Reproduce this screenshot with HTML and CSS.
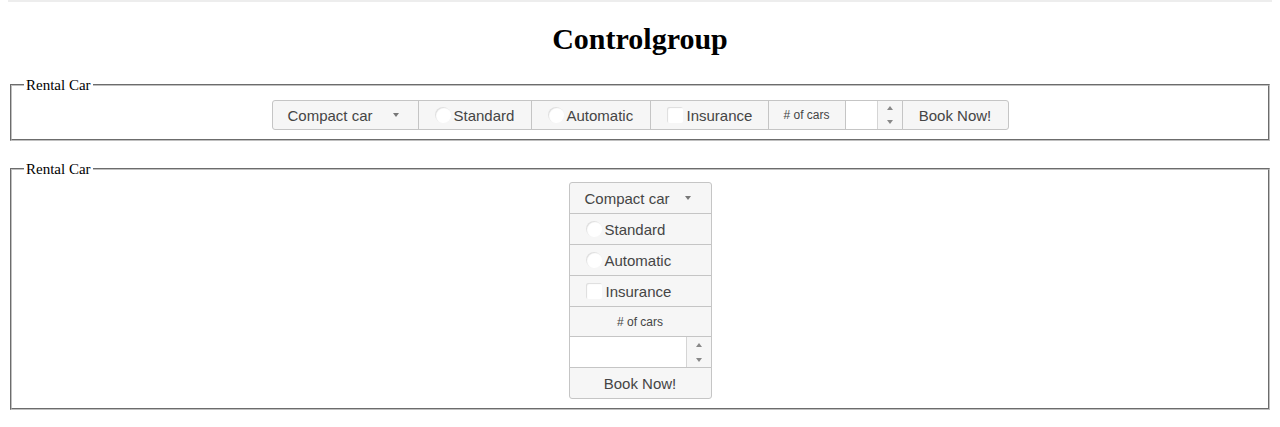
FILE: index.html
```html
<!DOCTYPE html>
<html>
<head>
<meta charset="utf-8">
<title>Controlgroup</title>
<link rel="stylesheet" href="styles.css">
</head>
<body>
<div class="topline"></div>
<h1 class="title">Controlgroup</h1>

<fieldset class="box box-h">
  <legend class="box-legend">Rental Car</legend>
  <div class="group group-h">
    <span class="item select w-select"><span>Compact car</span><span class="caret"></span></span>
    <span class="item check w-std"><span class="radio"></span>Standard</span>
    <span class="item check w-auto"><span class="radio"></span>Automatic</span>
    <span class="item check w-ins"><span class="checkbox"></span>Insurance</span>
    <span class="item label w-label"><span class="label-text"># of cars</span></span>
    <span class="item spinner w-spin"><span class="spin-input"></span><span class="spin-btns"><span class="spin-btn"><span class="arrow-up"></span></span><span class="spin-btn"><span class="arrow-down"></span></span></span></span>
    <span class="item button w-book">Book Now!</span>
  </div>
</fieldset>

<fieldset class="box box-v">
  <legend class="box-legend">Rental Car</legend>
  <div class="group group-v">
    <span class="item select"><span>Compact car</span><span class="caret"></span></span>
    <span class="item check"><span class="radio"></span>Standard</span>
    <span class="item check"><span class="radio"></span>Automatic</span>
    <span class="item check"><span class="checkbox"></span>Insurance</span>
    <span class="item label row-label"><span class="label-text"># of cars</span></span>
    <span class="item spinner"><span class="spin-input"></span><span class="spin-btns"><span class="spin-btn"><span class="arrow-up"></span></span><span class="spin-btn"><span class="arrow-down"></span></span></span></span>
    <span class="item button">Book Now!</span>
  </div>
</fieldset>
</body>
</html>
```

FILE: styles.css
```css
html, body {
  background: #ffffff;
}

body {
  margin: 0 8px 8px 8px;
  font-family: "Liberation Serif", "Times New Roman", serif;
  color: #000;
}

.topline {
  height: 2px;
  background: #ededed;
}

.title {
  margin: 19px 0 20px;
  text-align: center;
  font-family: "Liberation Serif", "Times New Roman", serif;
  font-size: 30px;
  font-weight: bold;
  line-height: 35px;
}

.box {
  margin: 0 2px;
  padding: 6px 12px 9px;
  border: 2px groove rgb(192, 192, 192);
  text-align: center;
}

.box-v {
  margin-top: 19px;
  padding-top: 4px;
}

.box-legend {
  padding: 0 2px;
  font-size: 15px;
  line-height: 18px;
  text-align: left;
}

.group {
  display: inline-flex;
  vertical-align: top;
}

.group-h {
  flex-direction: row;
}

.group-v {
  flex-direction: column;
  width: 143px;
}

.item {
  box-sizing: border-box;
  display: flex;
  align-items: center;
  border: 1px solid #c5c5c5;
  background: #f6f6f6;
  color: #454545;
  font-family: "Liberation Sans", Arial, sans-serif;
  font-size: 15px;
  white-space: nowrap;
}

.group-h .item {
  height: 30px;
  margin-left: -1px;
}

.group-h .item:first-child {
  margin-left: 0;
  border-radius: 3px 0 0 3px;
}

.group-h .item:last-child {
  border-radius: 0 3px 3px 0;
}

.group-v .item {
  height: 32px;
  margin-top: -1px;
}

.group-v .row-label {
  height: 31px;
}

.group-v .item:first-child {
  margin-top: 0;
  border-radius: 3px 3px 0 0;
}

.group-v .item:last-child {
  border-radius: 0 0 3px 3px;
}

/* widths in the horizontal group */
.w-select { width: 147px; }
.w-std { width: 114px; }
.w-auto { width: 120px; }
.w-ins { width: 119px; }
.w-label { width: 78px; }
.w-spin { width: 58px; }
.w-book { width: 107px; }

.select {
  justify-content: space-between;
  padding: 0 19px 0 15px;
}

.group-v .select {
  padding-right: 20px;
}

.caret {
  width: 0;
  height: 0;
  border-left: 3.5px solid transparent;
  border-right: 3.5px solid transparent;
  border-top: 4px solid #777;
}

.check {
  padding-left: 16px;
}

.radio,
.checkbox {
  flex: none;
  width: 16px;
  height: 16px;
  margin-right: 3px;
  background: #ffffff;
  box-shadow: inset 1px 1px 1px #dddddd;
}

.radio {
  border-radius: 50%;
}

.checkbox {
  border-radius: 2px;
  margin-right: 4px;
}

.label {
  justify-content: center;
}

.label-text {
  font-size: 12px;
}

.spinner {
  padding: 0;
  align-items: stretch;
}

.spin-input {
  flex: 1;
  background: #ffffff;
}

.spin-btns {
  flex: none;
  width: 24px;
  display: flex;
  flex-direction: column;
  border-left: 1px solid #d5d5d5;
  background: #f6f6f6;
}

.spin-btn {
  flex: 1;
  display: flex;
  align-items: center;
  justify-content: center;
}

.arrow-up,
.arrow-down {
  width: 0;
  height: 0;
  border-left: 3px solid transparent;
  border-right: 3px solid transparent;
}

.arrow-up {
  border-bottom: 4px solid #888;
}

.arrow-down {
  border-top: 4px solid #888;
}

.button {
  justify-content: center;
}
```
